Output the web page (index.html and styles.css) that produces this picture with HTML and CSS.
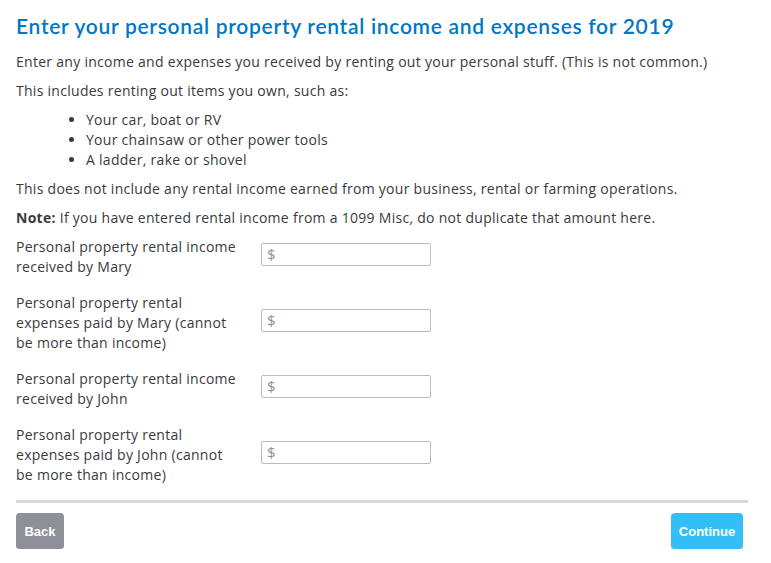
FILE: index.html
```html
<!DOCTYPE html>
<html lang="en">
<head>
<meta charset="utf-8">
<title>Personal property rental income</title>
<link rel="stylesheet" href="styles.css">
</head>
<body>
<main class="page">
  <h1 class="title">Enter your personal property rental income and expenses for 2019</h1>
  <p class="para">Enter any income and expenses you received by renting out your personal stuff. (This is not common.)</p>
  <p class="para">This includes renting out items you own, such as:</p>
  <ul class="list">
    <li>Your car, boat or RV</li>
    <li>Your chainsaw or other power tools</li>
    <li>A ladder, rake or shovel</li>
  </ul>
  <p class="para">This does not include any rental income earned from your business, rental or farming operations.</p>
  <p class="para"><strong>Note:</strong> If you have entered rental income from a 1099 Misc, do not duplicate that amount here.</p>

  <div class="form">
    <div class="row">
      <label class="label" for="f1">Personal property rental income received by Mary</label>
      <div class="field"><span class="cur">$</span><input id="f1" class="input" type="text"></div>
    </div>
    <div class="row">
      <label class="label" for="f2">Personal property rental expenses paid by Mary (cannot be more than income)</label>
      <div class="field"><span class="cur">$</span><input id="f2" class="input" type="text"></div>
    </div>
    <div class="row">
      <label class="label" for="f3">Personal property rental income received by John</label>
      <div class="field"><span class="cur">$</span><input id="f3" class="input" type="text"></div>
    </div>
    <div class="row">
      <label class="label" for="f4">Personal property rental expenses paid by John (cannot be more than income)</label>
      <div class="field"><span class="cur">$</span><input id="f4" class="input" type="text"></div>
    </div>
  </div>

  <div class="divider"></div>
  <div class="actions">
    <button class="btn btn-back" type="button">Back</button>
    <button class="btn btn-continue" type="button">Continue</button>
  </div>
</main>
</body>
</html>
```

FILE: styles.css
```css
html, body {
  margin: 0;
  padding: 0;
  background: #ffffff;
}
body {
  font-family: "Open Sans", Lato, sans-serif;
  color: #393a3d;
  font-size: 14px;
  letter-spacing: 0.28px;
}
.page {
  padding: 12px 23px 0 16px;
}
.title {
  margin: 0 0 12px 0;
  font-family: Lato, "Open Sans", sans-serif;
  font-size: 21px;
  line-height: 28px;
  font-weight: 600;
  letter-spacing: 0.7px;
  color: #0077c5;
}
.para {
  margin: 0 0 9px 0;
  line-height: 20px;
}
.list {
  margin: 0 0 9px 0;
  padding-left: 70px;
  line-height: 20px;
}
strong {
  font-weight: 700;
}
.form {
  display: flex;
  flex-direction: column;
  gap: 16px;
  margin-top: 4px;
}
.row {
  display: flex;
  align-items: center;
}
.label {
  width: 225px;
  margin-right: 20px;
  line-height: 20px;
}
.field {
  position: relative;
  display: flex;
  margin-bottom: 6px;
}
.cur {
  position: absolute;
  left: 6px;
  top: 3px;
  color: #8d9096;
  font-size: 15px;
  line-height: 17px;
  pointer-events: none;
}
.input {
  box-sizing: border-box;
  width: 170px;
  height: 23px;
  border: 1px solid #b9bbbe;
  border-radius: 2px;
  margin: 0;
  padding: 0 6px 0 18px;
  font: inherit;
}
.divider {
  height: 3px;
  background: #d8d8d8;
  margin-top: 15px;
}
.actions {
  display: flex;
  justify-content: space-between;
  padding-right: 5px;
  margin-top: 10px;
}
.btn {
  height: 36px;
  border: none;
  border-radius: 4px;
  color: #ffffff;
  font-family: "Liberation Sans", Arial, sans-serif;
  font-weight: 700;
  font-size: 13px;
  letter-spacing: 0;
  padding: 0;
  box-shadow: 0 2px 0 rgba(0, 0, 0, 0.12);
}
.btn-back {
  width: 48px;
  background: #8d9096;
}
.btn-continue {
  width: 72px;
  background: #33bff5;
}
```
